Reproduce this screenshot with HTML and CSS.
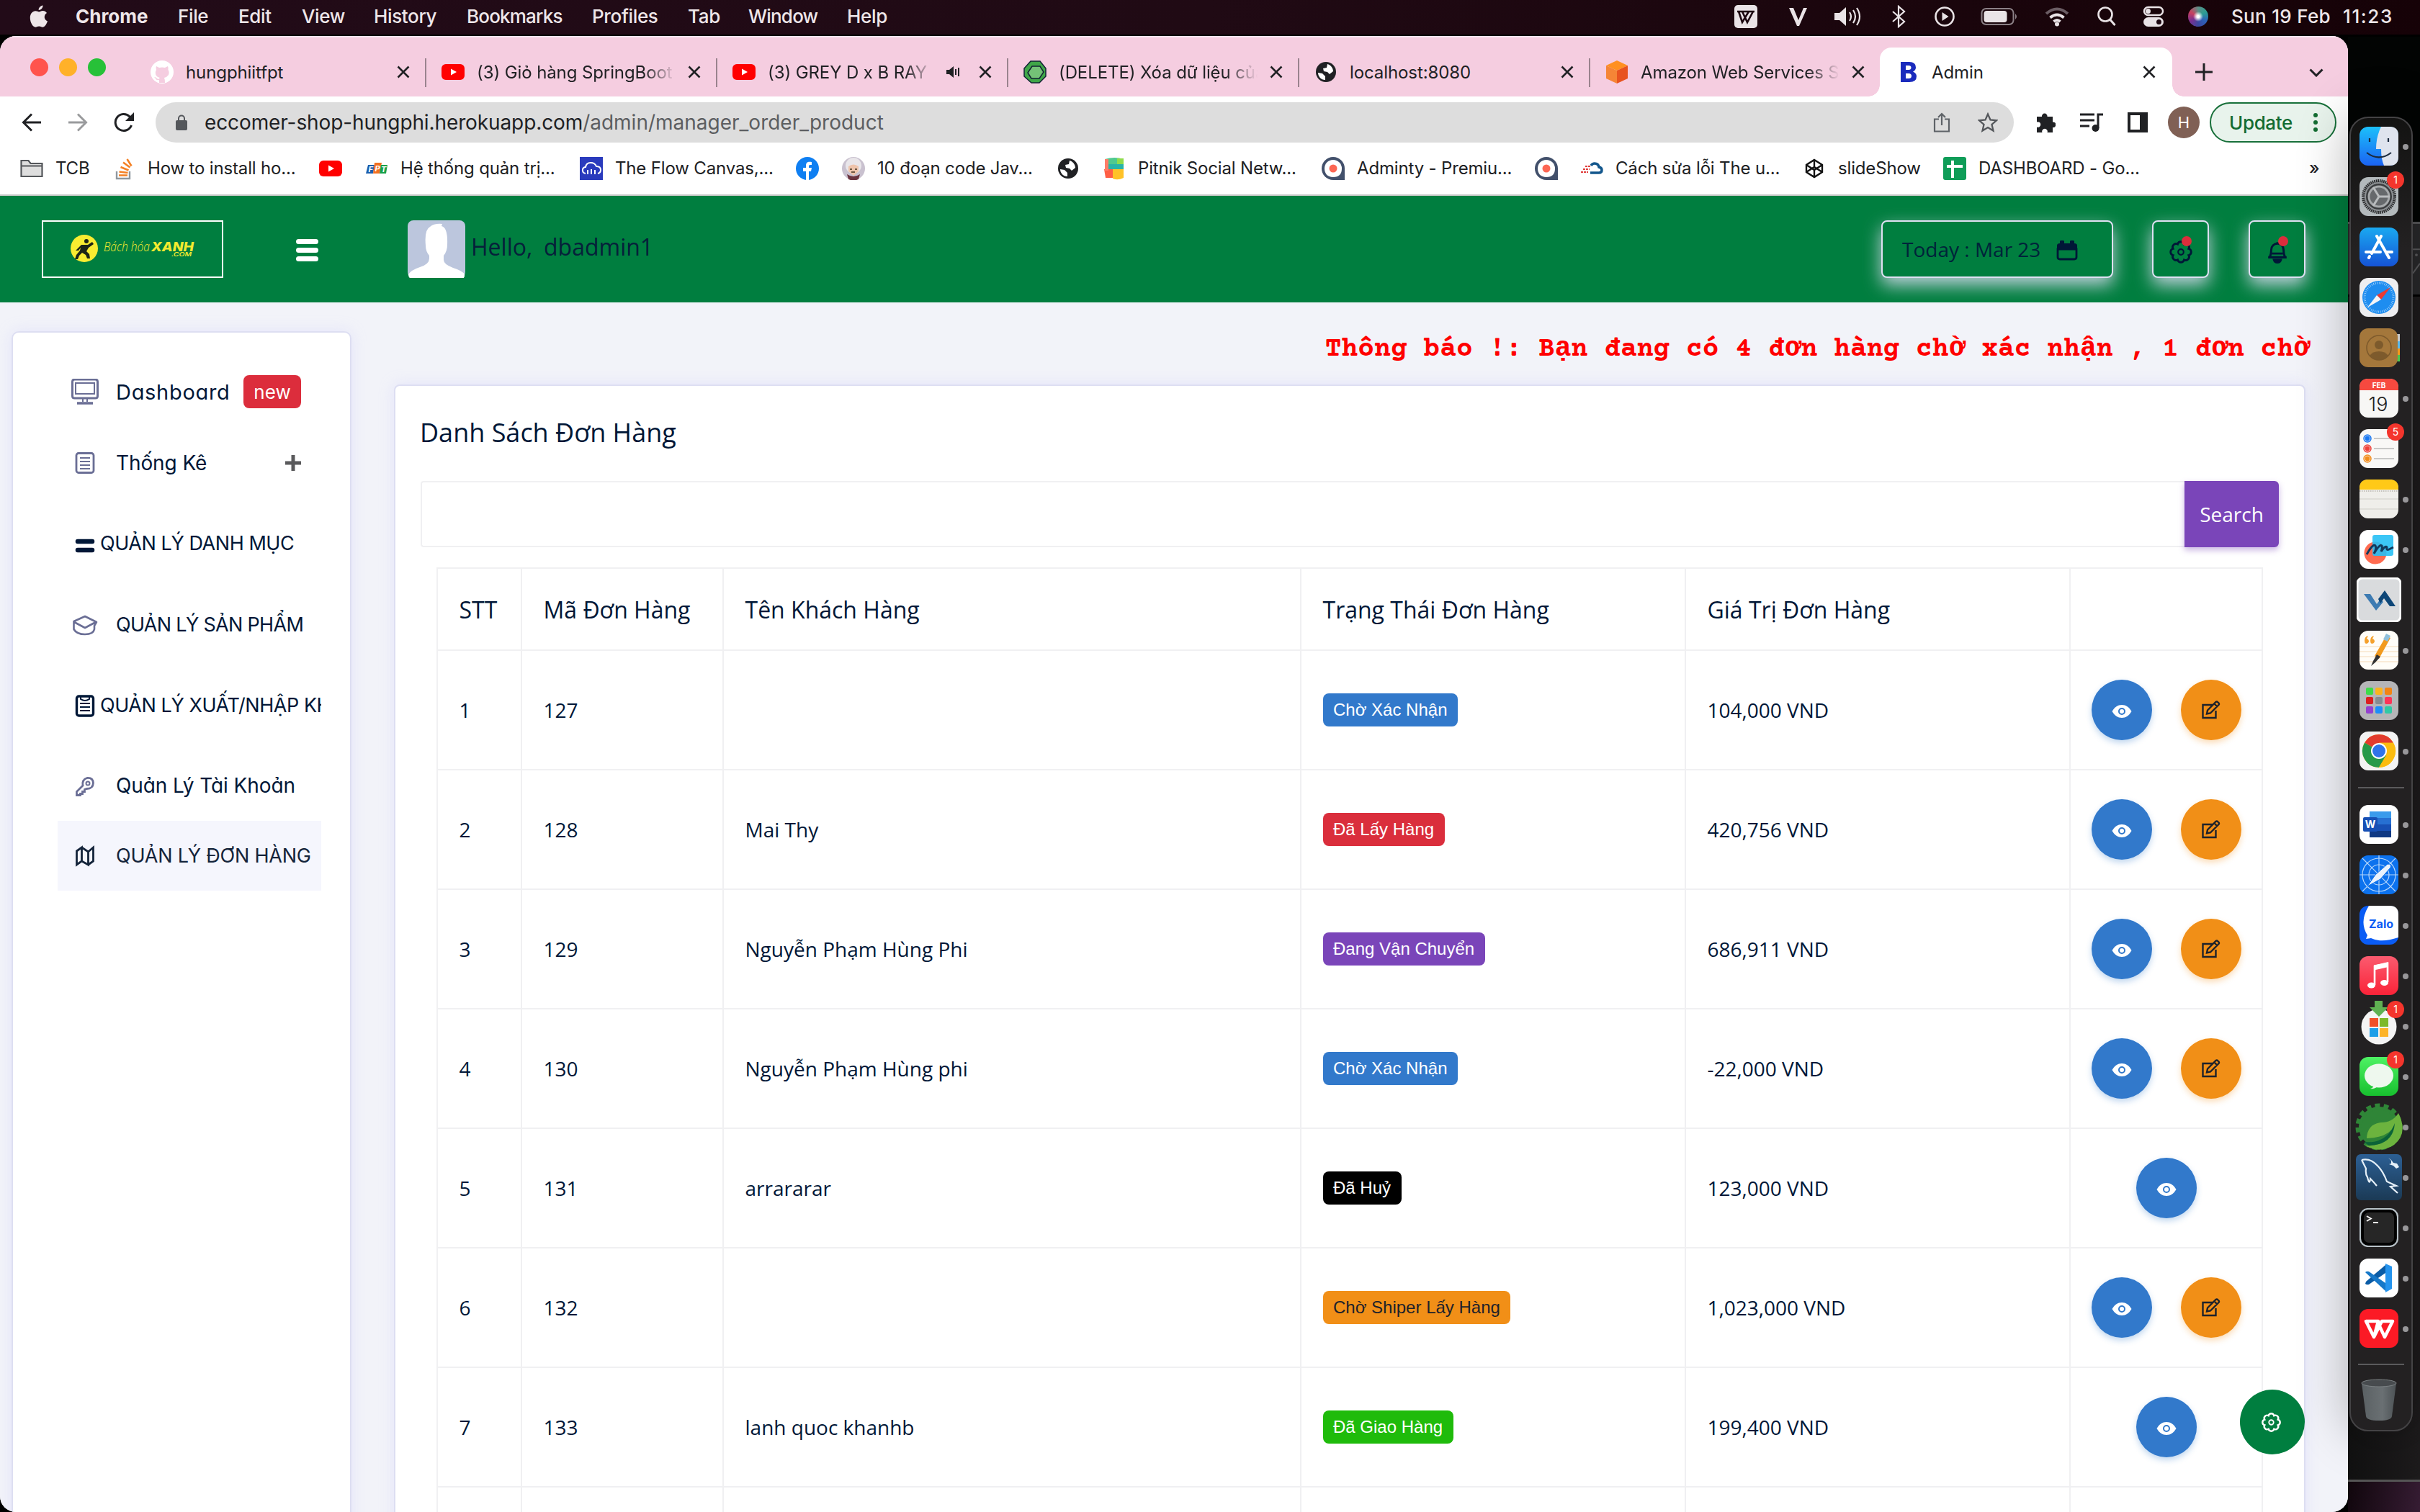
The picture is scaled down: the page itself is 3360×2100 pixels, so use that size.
FILE: index.html
```html
<!DOCTYPE html>
<html lang="vi">
<head>
<meta charset="utf-8">
<title>Admin</title>
<link rel="stylesheet" href="styles.css">
</head>
<body>
<svg class="defs" aria-hidden="true">
  <symbol id="i-x" viewBox="0 0 18 18"><path d="M1.500 1.500l15 15M16.500 1.500l-15 15" stroke="#202124" stroke-width="2.600" fill="none"/></symbol>
  <symbol id="i-yt" viewBox="0 0 32 32"><rect y="5" width="32" height="22" rx="6" fill="#f00"/><path d="M13 11.500v9l8-4.500z" fill="#fff"/></symbol>
  <symbol id="i-globe" viewBox="0 0 32 32"><circle cx="16" cy="16" r="14" fill="#202124"/><path d="M18 5c4 1 8 5 8 10l-5 4-3-3-5-1-1-4 5-1zM5 17l6 1 4 4v5C9 27 5 22 5 17z" fill="#fff"/></symbol>
  <symbol id="i-eye" viewBox="0 0 28 20"><path d="M.5 10C4 4 8.500 1 14 1s10 3 13.500 9C24 16 19.500 19 14 19S4 16 .5 10z" fill="#fff"/><circle cx="14" cy="10" r="4" fill="#fff" stroke="#3279cb" stroke-width="2"/></symbol>
  <symbol id="i-edit" viewBox="0 0 26 26"><path d="M15 6H1.500v18H19.500V14M7 18.500l1-5L19.500 2q1.500-1 3 .5l1 1q1 1.500 0 2.500L12 17.500l-5 1zM17.500 4.500l4 4" fill="none" stroke="#1d222b" stroke-width="2.400"/></symbol>
  <symbol id="i-gear" viewBox="0 0 24 24"><path d="M19.670 8.820a3.300 3.300 0 0 1 0 6.360a3.300 3.300 0 0 1-4.490 4.490a3.300 3.300 0 0 1-6.360 0a3.300 3.300 0 0 1-4.490-4.490a3.300 3.300 0 0 1 0-6.360a3.300 3.300 0 0 1 4.490-4.490a3.300 3.300 0 0 1 6.360 0a3.300 3.300 0 0 1 4.490 4.490z" fill="none" stroke="currentColor" stroke-width="2"/><circle cx="12" cy="12" r="2.700" fill="none" stroke="currentColor" stroke-width="1.500"/></symbol>
  <symbol id="i-adm" viewBox="0 0 32 32"><path d="M16 0a16 16 0 0 1 16 16v16H16A16 16 0 0 1 16 0z" fill="#42506b"/><path d="M16 4a12 12 0 0 1 12 12c0 8-4 12-12 12S4 23 4 16 9 4 16 4z" fill="#fff"/><circle cx="16" cy="16" r="5.500" fill="#fc6754"/></symbol>
</svg>

<div class="desktop">
  <div class="menubar">
    <svg class="apple" viewBox="0 0 26 32"><path d="M18.500.5c.3 3-2.500 6.500-5.800 6.500C12.300 4 15.300.8 18.500.5zM13.200 9.500c1.200 0 2.800-1.600 5.300-1.600 2.200 0 4.200 1 5.500 3-4.800 3-4 9.500 1 11.500-1.500 4-4 8.300-6.800 8.300-2 0-2.800-1.200-5-1.200s-3 1.200-5 1.200C4.500 30.700.8 24 .8 17.800c0-6 3.700-9.500 7.400-9.500 2.200 0 3.800 1.200 5 1.200z" fill="#eee6e9"/></svg>
    <nav class="menu"><b>Chrome</b><span>File</span><span>Edit</span><span>View</span><span>History</span><span>Bookmarks</span><span>Profiles</span><span>Tab</span><span>Window</span><span>Help</span></nav>
    <div class="status">
      <svg viewBox="0 0 32 32"><rect width="32" height="32" rx="5" fill="#e9e3e6"/><path d="M4 9h24M6 9l5 15 9-15M11 9l7 15 8-15" fill="none" stroke="#1c0710" stroke-width="2.600"/></svg>
      <svg class="vee" viewBox="0 0 32 32"><path d="M4 4h6l7 17 7-17h5L18 29h-3z" fill="#e9e3e6"/></svg>
      <svg class="vol" viewBox="0 0 40 32"><path d="M1 11h7l9-8v26l-9-8H1z" fill="#e9e3e6"/><path d="M22 10q4 6 0 12M27 7q6 9 0 18M32 4q8 12 0 24" fill="none" stroke="#e9e3e6" stroke-width="2.200"/></svg>
      <svg class="bt" viewBox="0 0 32 32"><path d="M8 9l16 14-8 7V2l8 7L8 23" fill="none" stroke="#e9e3e6" stroke-width="2.200"/></svg>
      <svg class="play" viewBox="0 0 32 32"><circle cx="16" cy="16" r="12.500" fill="none" stroke="#e9e3e6" stroke-width="2.600"/><path d="M12.500 10v12l9-6z" fill="#e9e3e6"/></svg>
      <svg class="bat" viewBox="0 0 52 32"><rect x="1.500" y="5" width="44" height="22" rx="6" fill="none" stroke="#8b8086" stroke-width="2"/><rect x="4.500" y="8" width="32" height="16" rx="4" fill="#e9e3e6"/><path d="M48 12q4 4 0 8z" fill="#8b8086"/></svg>
      <svg class="wifi" viewBox="0 0 34 32"><path d="M2 12q15-13 30 0" fill="none" stroke="#6b5d64" stroke-width="4"/><path d="M7.500 17.500q9.500-8 19 0M12.500 23q4.500-4 9 0" fill="none" stroke="#e9e3e6" stroke-width="4"/><circle cx="17" cy="26.500" r="3" fill="#e9e3e6"/></svg>
      <svg class="find" viewBox="0 0 32 32"><circle cx="14" cy="13" r="9.500" fill="none" stroke="#e9e3e6" stroke-width="2.600"/><path d="M20.500 20l7 8" stroke="#e9e3e6" stroke-width="3"/></svg>
      <svg class="cc" viewBox="0 0 32 32"><rect x="3" y="3" width="26" height="11" rx="5.500" fill="none" stroke="#e9e3e6" stroke-width="2.400"/><circle cx="8.500" cy="8.500" r="3.500" fill="#e9e3e6"/><rect x="2" y="17" width="28" height="13" rx="6.500" fill="#e9e3e6"/><circle cx="23.500" cy="23.500" r="3.500" fill="#1c0710"/></svg>
      <i class="siri"></i>
      <span class="clock">Sun 19 Feb</span><span class="clock time">11:23</span>
    </div>
  </div>

  <div class="behind"><i class="b1"></i><i class="b2"><svg viewBox="0 0 10 100"><path d="M0 36h10M0 70l10-14" stroke="#5b5b5d" stroke-width="2" fill="none"/><circle cx="5" cy="44" r="2" fill="#5b5b5d"/></svg></i><i class="b3"></i><i class="b4"></i></div>

  <div class="window">
    <div class="tabstrip">
      <div class="lights"><i></i><i></i><i></i></div>
      <div class="tab"><svg class="fav" viewBox="0 0 32 32"><circle cx="16" cy="16" r="16" fill="#fff"/><path d="M8 8l4 2q4-1 8 0l4-2q1 2 .5 5 2 3 .5 7-2 3-6 4 1 2 1 7h-8v-4q-4 1-5-2l-2-2q3 0 4 2 1 1 3 .5 0-1 1-1.500-5-1-6-5-.5-4 1-6Q7 10 8 8z" fill="#f5cde0"/></svg><span class="title">hungphiitfpt</span><svg class="x"><use href="#i-x"/></svg></div>
      <div class="tab"><svg class="fav"><use href="#i-yt"/></svg><span class="title fade">(3) Giỏ hàng SpringBoot</span><svg class="x"><use href="#i-x"/></svg></div>
      <div class="tab"><svg class="fav"><use href="#i-yt"/></svg><span class="title fade short">(3) GREY D x B RAY -</span><svg class="spk" viewBox="0 0 20 20"><path d="M0 7h4l6-5v16l-6-5H0z" fill="#202124"/><path d="M13 6v8M17 4v12" stroke="#202124" stroke-width="2"/></svg><svg class="x"><use href="#i-x"/></svg></div>
      <div class="tab"><svg class="fav" viewBox="0 0 32 32"><path d="M10 1h13l8 10v11l-9 9H11L1 22V11z" fill="#3fa648" stroke="#123" stroke-width="1.500"/><path d="M12 8h11l5 8-6 9H11l-5-8z" fill="#74c277" stroke="#123" stroke-width="1.500"/></svg><span class="title fade">(DELETE) Xóa dữ liệu của</span><svg class="x"><use href="#i-x"/></svg></div>
      <div class="tab"><svg class="fav"><use href="#i-globe"/></svg><span class="title">localhost:8080</span><svg class="x"><use href="#i-x"/></svg></div>
      <div class="tab last"><svg class="fav" viewBox="0 0 32 32"><path d="M16 0l15 7-15 7L1 7z" fill="#ff9021"/><path d="M1 7l15 7v18L1 25z" fill="#f58536"/><path d="M31 7l-15 7v18l15-7z" fill="#e8531f"/></svg><span class="title fade">Amazon Web Services Si</span><svg class="x"><use href="#i-x"/></svg></div>
      <div class="tab active"><svg class="fav" viewBox="0 0 32 32"><path fill-rule="evenodd" d="M7 2h12q9 0 9 7.500 0 4-4 6 5 2 5 6.500 0 8-10 8H7zm7 5v6h4q3.500 0 3.500-3T18 7zm0 11v7h4q4 0 4-3.500T18 18z" fill="#1a2bbd"/></svg><span class="title">Admin</span><svg class="x"><use href="#i-x"/></svg></div>
      <svg class="plus" viewBox="0 0 24 24"><path d="M12 0v24M0 12h24" stroke="#202124" stroke-width="3"/></svg>
      <svg class="chev" viewBox="0 0 20 12"><path d="M1.500 1.500l8.500 8.500 8.500-8.500" fill="none" stroke="#202124" stroke-width="3"/></svg>
    </div>

    <div class="toolbar">
      <svg class="nav n1" viewBox="0 0 28 28"><path d="M27 14H3M14 2.500L2.500 14 14 25.500" fill="none" stroke="#202124" stroke-width="3"/></svg>
      <svg class="nav n2" viewBox="0 0 28 28"><path d="M1 14h24M14 2.500L25.500 14 14 25.500" fill="none" stroke="#9a9b9d" stroke-width="3"/></svg>
      <svg class="nav n3" viewBox="0 0 28 28"><path d="M24.500 18A11.500 11.500 0 1 1 22 6l3 3" fill="none" stroke="#202124" stroke-width="3"/><path d="M28 0v12H16z" fill="#202124"/></svg>
      <div class="omnibox">
        <svg class="lock" viewBox="0 0 16 22"><path d="M4 9V5.500a4 4 0 0 1 8 0V9" fill="none" stroke="#54575b" stroke-width="2"/><rect y="8" width="16" height="14" rx="2" fill="#54575b"/></svg>
        <span class="url"><b>eccomer-shop-hungphi.herokuapp.com</b>/admin/manager_order_product</span>
        <svg class="share" viewBox="0 0 24 28"><path d="M8 9.500H2v17h20v-17h-6M12 18V2M7 7l5-5 5 5" fill="none" stroke="#5f6368" stroke-width="2.200"/></svg>
        <svg class="star" viewBox="0 0 28 28"><path d="M14 2.500l3.500 8 8.500.8-6.500 5.700 2 8.500L14 21l-7.500 4.500 2-8.500L2 11.300l8.500-.8z" fill="none" stroke="#54575b" stroke-width="2.300"/></svg>
      </div>
      <svg class="tool" viewBox="0 0 28 28"><path d="M2 6h7a3.800 3.800 0 1 1 7.500 0H24v7.500a3.800 3.800 0 1 1 0 7.500v7h-7.500a3.800 3.800 0 1 0-7 0H2v-7.500a3.800 3.800 0 1 0 0-7z" fill="#202124"/></svg>
      <svg class="tool t2" viewBox="0 0 32 28"><path d="M0 3h20M0 11h20M0 19h13" stroke="#202124" stroke-width="3"/><path d="M25 22V3h7" fill="none" stroke="#202124" stroke-width="3"/><circle cx="21.500" cy="22" r="5" fill="#202124"/></svg>
      <svg class="tool t3" viewBox="0 0 28 28"><path fill-rule="evenodd" d="M0 0h28v28H0zm4 4v20h13V4z" fill="#202124"/></svg>
      <span class="me">H</span>
      <span class="update">Update<svg viewBox="0 0 8 26"><circle cx="4" cy="3" r="3"/><circle cx="4" cy="13" r="3"/><circle cx="4" cy="23" r="3"/></svg></span>
    </div>

    <div class="bookmarks">
      <span><svg viewBox="0 0 32 26"><path d="M1.500 24V2h10l3 4h16v18z" fill="#dedede" stroke="#54575b" stroke-width="2.200"/><path d="M2 9.500h28" stroke="#54575b" stroke-width="2"/></svg>TCB</span>
      <span><svg viewBox="0 0 32 32"><path d="M6 20v10h18V20" fill="none" stroke="#8f979e" stroke-width="2.400"/><path d="M9 25.500h12M9.500 20.500l12 1.500M11.500 14l11 4.500M15 7.500l9.500 7M20.500 3l6 9.500" stroke="#f48024" stroke-width="2.600"/></svg>How to install ho...</span>
      <span><svg><use href="#i-yt"/></svg></span>
      <span><svg viewBox="0 0 32 32"><path d="M4 11h9l-2 12H1z" fill="#1b5fae"/><path d="M13 8h10l-3 15h-9z" fill="#f26f21"/><path d="M22 11h9l-2 12h-9z" fill="#18a04a"/><text x="4.500" y="21" class="fpt">F</text><text x="13.500" y="20" class="fpt">P</text><text x="22" y="21" class="fpt">T</text></svg>Hệ thống quản trị...</span>
      <span><svg viewBox="0 0 32 32"><path d="M0 0h32v32H0z" fill="#2a3bbd"/><path d="M8 23q-5-1-4-6 1-3 4-3 1-6 7-6t8 5q6 0 6 5 0 4-4 5M11 24v-6M16 24v-7M21 24v-6" fill="none" stroke="#fff" stroke-width="2"/></svg>The Flow Canvas,...</span>
      <span><svg viewBox="0 0 32 32"><circle cx="16" cy="16" r="16" fill="#0f7ff2"/><path d="M14 32V20h-4v-5h4v-3c0-5 3-6 8-5v4c-3 0-4 0-4 2v2h4l-1 5h-3v12z" fill="#fff"/></svg></span>
      <span><svg viewBox="0 0 32 32"><circle cx="16" cy="16" r="16" fill="#c9c1cf"/><circle cx="16" cy="12" r="11" fill="#e9e6ea"/><path d="M9 13q7-5 14 0v7l-7 6-7-6z" fill="#eec4ac"/><path d="M7 24q9 6 18 0l-2 7q-7 3-14 0z" fill="#6b3440"/><path d="M11 17h3M18 17h3M13 21h5" stroke="#432" stroke-width="1.500"/></svg>10 đoạn code Jav...</span>
      <span><svg><use href="#i-globe"/></svg></span>
      <span><svg viewBox="0 0 32 32"><path d="M3 3q14-4 26 0v11H3z" fill="#4fc98f"/><path d="M3 10h26v9H3z" fill="#29b4a8"/><path d="M2 17h14l-2 12H4z" fill="#ff5f45"/><path d="M14 17h15v12q-8 4-15 1z" fill="#ffc227"/><path d="M3 3h5v16H3z" fill="#ff7d68"/><path d="M20 2h9v8h-9z" fill="#8fdc4c"/></svg>Pitnik Social Netw...</span>
      <span><svg><use href="#i-adm"/></svg>Adminty - Premiu...</span>
      <span><svg><use href="#i-adm"/></svg></span>
      <span><svg viewBox="0 0 32 32"><path d="M14 22h12q4 0 4-4 0-3-4-4-1-5-6-5-3 0-5 3" fill="none" stroke="#12568c" stroke-width="3.500"/><path d="M7 13h8M4 17h9M1 21h10" stroke="#e0403f" stroke-width="2" stroke-dasharray="3 1"/></svg>Cách sửa lỗi The u...</span>
      <span><svg viewBox="0 0 32 32"><path d="M16 4l11 7v10l-11 7-11-7V11zM5 11l11 7 11-7M5 21l11-7 11 7M16 4v10M16 18v10" fill="none" stroke="#111" stroke-width="2.400"/></svg>slideShow</span>
      <span><svg viewBox="0 0 32 32"><rect width="32" height="32" rx="3" fill="#0f9d58"/><path d="M13 5v24M5 13h22" stroke="#fff" stroke-width="4"/></svg>DASHBOARD - Go...</span>
      <span class="more">»</span>
    </div>

    <div class="page">
      <header class="topbar">
        <div class="logo">
          <svg viewBox="0 0 248 76"><circle cx="57" cy="37" r="19" fill="#f9ec31"/><g fill="#1d2417"><circle cx="60" cy="27" r="3"/><path d="M53 32h9l6-4 2 3-7 5-3 5 4 4 1 6h-4l-2-5-5-3-4 4-2 5h-4l2-6 5-6 1-4-3 4h-4z"/></g><text x="84" y="41" textLength="64" lengthAdjust="spacingAndGlyphs" class="lg1">Bách hóa</text><text x="150" y="41" textLength="59" lengthAdjust="spacingAndGlyphs" class="lg2">XANH</text><text x="178" y="48" textLength="28" lengthAdjust="spacingAndGlyphs" class="lg3">.COM</text></svg>
        </div>
        <div class="burger"><i></i><i></i><i></i></div>
        <svg class="avatar" viewBox="0 0 80 80"><rect width="80" height="80" rx="8" fill="#bcc6dd"/><path d="M1 75q4-6 16-10 13-4 13-12v-4q-5-6-5-14-2-22 6-26 6-5 17-4l-1 3q9 2 8 26 0 9-5 15v6q0 6 13 11 13 4 16 9v2q0 4-5 4H6q-5 0-5-6z" fill="#fff"/></svg>
        <span class="hello">Hello,</span><span class="user">dbadmin1</span>
        <div class="btn today">Today : Mar 23<svg viewBox="0 0 30 28"><path d="M2 12v11q0 3 3 3h20q3 0 3-3V12z" fill="none" stroke="#001737" stroke-width="2.800"/><path d="M1 12V7q0-3 4-3V1q0-1 2-1h2q2 0 2 1v3h8V1q0-1 2-1h2q2 0 2 1v3q4 0 4 3v5z" fill="#001737"/></svg></div>
        <div class="btn sq"><svg><use href="#i-gear"/></svg><i></i></div>
        <div class="btn sq"><svg viewBox="0 0 28 32"><path d="M14 3v3M4 23q2-4 2-10a8 8 0 0 1 16 0q0 6 2 10zM7 18h14" fill="none" stroke="#001737" stroke-width="2.800"/><path d="M2 22.500h24M9 26h10q-1 4-5 4t-5-4z" fill="#001737" stroke="#001737" stroke-width="2"/></svg><i></i></div>
      </header>

      <div class="body">
        <aside class="sidebar">
          <a class="wide"><svg viewBox="0 0 38 36"><path d="M1.500 4q0-3 3-3h29q3 0 3 3v20q0 3-3 3h-29q-3 0-3-3z" fill="none" stroke="#6a6e95" stroke-width="3"/><path d="M6 6h26v15H6zM16 27v5M22 27v5" fill="none" stroke="#6a6e95" stroke-width="2"/><path d="M8 34h22" stroke="#6a6e95" stroke-width="3.500"/></svg><span>Dashboard</span><em>new</em></a>
          <a><svg viewBox="0 0 38 36"><rect x="7" y="4.500" width="24" height="27" rx="3" fill="none" stroke="#6a6e95" stroke-width="2.800"/><path d="M12 11h14M12 16h14M12 21h14M12 26h14" stroke="#6a6e95" stroke-width="1.800"/></svg><span>Thống Kê</span><svg class="add" viewBox="0 0 22 22"><path d="M11 0v22M0 11h22" stroke="#5a5a5c" stroke-width="5"/></svg></a>
          <a class="tight"><svg viewBox="0 0 38 36"><path d="M9 15h20M9 27h20" stroke="#001737" stroke-width="6.500" stroke-linecap="round"/></svg><span class="caps mid">QUẢN LÝ DANH MỤC</span></a>
          <a><svg viewBox="0 0 38 36"><path d="M19 7L3.500 14v11q4 7 15.500 7t13-7v-5l3-5zM4 15l15 8 15-8" fill="none" stroke="#6a6e95" stroke-width="2.600" stroke-linejoin="round"/></svg><span class="caps">QUẢN LÝ SẢN PHẨM</span></a>
          <a class="tight"><svg viewBox="0 0 38 36"><rect x="7.500" y="6" width="23" height="27" rx="3" fill="none" stroke="#001737" stroke-width="3.400"/><path d="M13 6v4q6 4 12 0V6M12 16h14M12 21h14M12 26h14" fill="none" stroke="#001737" stroke-width="2"/></svg><span class="caps mid">QUẢN LÝ XUẤT/NHẬP KHO</span></a>
          <a><svg viewBox="0 0 38 36"><path d="M7.500 31.500v-5l8.500-8.500q-1.500-8 6-10.500 8-.5 8.500 7-.5 8-9 8l-3 1v3h-3v3h-3v2z" fill="none" stroke="#6a6e95" stroke-width="2.800"/><circle cx="23" cy="15" r="2.500" fill="none" stroke="#6a6e95" stroke-width="2"/></svg><span>Quản Lý Tài Khoản</span></a>
          <a class="on"><svg viewBox="0 0 38 36"><path d="M7.500 11l7-5v19l-7 5zM14.500 6l9 6v18l-9-5M23.500 12l7-6v19l-7 5" fill="none" stroke="#14243a" stroke-width="2.800"/></svg><span class="caps loose">QUẢN LÝ ĐƠN HÀNG</span></a>
        </aside>

        <main>
          <div class="notice">Thông báo !: Bạn đang có 4 đơn hàng chờ xác nhận , 1 đơn chờ</div>
          <section class="card">
            <h2>Danh Sách Đơn Hàng</h2>
            <div class="search"><div class="field"></div><button>Search</button></div>
            <table>
              <colgroup><col class="c1"><col class="c2"><col class="c3"><col class="c4"><col class="c5"><col class="c6"></colgroup>
              <thead><tr><th>STT</th><th>Mã Đơn Hàng</th><th>Tên Khách Hàng</th><th>Trạng Thái Đơn Hàng</th><th>Giá Trị Đơn Hàng</th><th></th></tr></thead>
              <tbody>
                <tr><td>1</td><td>127</td><td></td><td><span class="badge blue">Chờ Xác Nhận</span></td><td>104,000 VND</td><td><div class="acts"><i class="eye"><svg><use href="#i-eye"/></svg></i><i class="edit"><svg><use href="#i-edit"/></svg></i></div></td></tr>
                <tr><td>2</td><td>128</td><td>Mai Thy</td><td><span class="badge red">Đã Lấy Hàng</span></td><td>420,756 VND</td><td><div class="acts"><i class="eye"><svg><use href="#i-eye"/></svg></i><i class="edit"><svg><use href="#i-edit"/></svg></i></div></td></tr>
                <tr><td>3</td><td>129</td><td>Nguyễn Phạm Hùng Phi</td><td><span class="badge purple">Đang Vận Chuyển</span></td><td>686,911 VND</td><td><div class="acts"><i class="eye"><svg><use href="#i-eye"/></svg></i><i class="edit"><svg><use href="#i-edit"/></svg></i></div></td></tr>
                <tr><td>4</td><td>130</td><td>Nguyễn Phạm Hùng phi</td><td><span class="badge blue">Chờ Xác Nhận</span></td><td>-22,000 VND</td><td><div class="acts"><i class="eye"><svg><use href="#i-eye"/></svg></i><i class="edit"><svg><use href="#i-edit"/></svg></i></div></td></tr>
                <tr><td>5</td><td>131</td><td>arrararar</td><td><span class="badge black">Đã Huỷ</span></td><td>123,000 VND</td><td><div class="acts"><i class="eye"><svg><use href="#i-eye"/></svg></i></div></td></tr>
                <tr><td>6</td><td>132</td><td></td><td><span class="badge orange">Chờ Shiper Lấy Hàng</span></td><td>1,023,000 VND</td><td><div class="acts"><i class="eye"><svg><use href="#i-eye"/></svg></i><i class="edit"><svg><use href="#i-edit"/></svg></i></div></td></tr>
                <tr><td>7</td><td>133</td><td>lanh quoc khanhb</td><td><span class="badge green">Đã Giao Hàng</span></td><td>199,400 VND</td><td><div class="acts"><i class="eye"><svg><use href="#i-eye"/></svg></i></div></td></tr>
                <tr><td></td><td></td><td></td><td></td><td></td><td></td></tr>
              </tbody>
            </table>
          </section>
        </main>
      </div>
      <div class="fab"><svg><use href="#i-gear"/></svg></div>
    </div>
  </div>

  <div class="dock">
    <div class="app run"><svg viewBox="0 0 54 54"><defs><linearGradient id="gf" x2="0" y2="1"><stop stop-color="#1cc0fb"/><stop offset="1" stop-color="#1b63f2"/></linearGradient></defs><rect width="54" height="54" rx="12" fill="url(#gf)"/><path d="M30 0q-7 14-7 31h7q0 14 4 23h8q12 0 12-12V12Q54 0 42 0z" fill="#dfe4ee"/><path d="M10 36q17 13 34 0M14 16v5M40 16v5" fill="none" stroke="#1b2a3d" stroke-width="2.200"/></svg></div>
    <div class="app"><svg viewBox="0 0 54 54"><rect width="54" height="54" rx="12" fill="#b3b9bc"/><circle cx="27" cy="27" r="22" fill="#8d9194" stroke="#2a2b2d" stroke-width="4" stroke-dasharray="1.600 1"/><circle cx="27" cy="27" r="18" fill="#3b3d3f"/><circle cx="27" cy="27" r="14" fill="#66696c" stroke="#a6a9ab" stroke-width="3"/><path d="M27 27h15M27 27l-8-13M27 27l-8 13" stroke="#b9bcbe" stroke-width="3"/></svg><b>1</b></div>
    <div class="app"><svg viewBox="0 0 54 54"><defs><linearGradient id="ga" x2="0" y2="1"><stop stop-color="#1aa9f1"/><stop offset="1" stop-color="#1553d6"/></linearGradient></defs><rect width="54" height="54" rx="12" fill="url(#ga)"/><path d="M30 12L17 36M24 12l17 30M9 34h20M37 34h8M14 40l-1 2" stroke="#fff" stroke-width="4" stroke-linecap="round"/></svg></div>
    <div class="app"><svg viewBox="0 0 54 54"><rect width="54" height="54" rx="12" fill="#eeeef0"/><circle cx="27" cy="27" r="23" fill="#1e8df0"/><circle cx="27" cy="27" r="20" fill="none" stroke="#a9d4fa" stroke-width="3" stroke-dasharray=".8 1.800"/><path d="M43 13L24 24l6 6z" fill="#ea3b34"/><path d="M11 41l13-17 6 6z" fill="#f4f5f7"/></svg></div>
    <div class="app"><svg viewBox="0 0 58 54" class="w58"><path d="M50 8h7v10h-7z" fill="#c9c9c9"/><path d="M50 18h7v10h-7z" fill="#5bb9ea"/><path d="M50 28h7v10h-7z" fill="#f59a1c"/><path d="M50 37h7v9h-7z" fill="#4cc94e"/><rect x="1" width="53" height="54" rx="12" fill="#a4773b"/><circle cx="28" cy="27" r="17" fill="none" stroke="#7d5a2c" stroke-width="1.600"/><circle cx="28" cy="23" r="6" fill="#7d5a2c"/><path d="M15 38q4-6 13-6t13 6q-5 6-13 6t-13-6z" fill="#7d5a2c"/></svg></div>
    <div class="app run"><svg viewBox="0 0 54 54"><rect width="54" height="54" rx="12" fill="#f7f7f5"/><path d="M0 16v-4Q0 0 12 0h30q12 0 12 12v4z" fill="#f7493f"/><text x="27" y="13" class="feb">FEB</text><text x="26" y="45" class="d19">19</text></svg></div>
    <div class="app"><svg viewBox="0 0 54 54"><rect width="54" height="54" rx="12" fill="#f9f8f6"/><path d="M20 13h28M20 27h28M20 41h28" stroke="#b9b9b9" stroke-width="1.500"/><g stroke-width="1.500"><circle cx="11" cy="13" r="3.400" fill="#1877f2"/><circle cx="11" cy="27" r="3.400" fill="#ee4139"/><circle cx="11" cy="41" r="3.400" fill="#f28c1a"/><g fill="none"><circle cx="11" cy="13" r="5" stroke="#1877f2"/><circle cx="11" cy="27" r="5" stroke="#ee4139"/><circle cx="11" cy="41" r="5" stroke="#f28c1a"/></g></g></svg><b>5</b></div>
    <div class="app run"><svg viewBox="0 0 54 54"><rect width="54" height="54" rx="12" fill="#efeeea"/><path d="M0 14v-2Q0 0 12 0h30q12 0 12 12v2z" fill="#ffc917"/><path d="M0 16h54" stroke="#9a968b" stroke-dasharray="1.500 1.500"/><path d="M0 27h54M0 41h54" stroke="#cfcdc8" stroke-width="1.200"/></svg></div>
    <div class="app run"><svg viewBox="0 0 54 54"><rect width="54" height="54" rx="12" fill="#fff"/><circle cx="22" cy="32" r="15.500" fill="#ff6b50"/><rect x="18" y="7" width="29" height="29" rx="3" fill="#27c0f5" opacity=".9"/><path d="M10 34q9-16 12-12 2 4-2 11 8-14 11-11 1 3-1 8 6-9 8-6-1 5 3 3l6-3" fill="none" stroke="#123a5e" stroke-width="3"/></svg></div>
    <div class="app"><svg viewBox="0 0 62 62" class="w62"><rect x="1" y="1" width="60" height="60" rx="7" fill="#d9dbdd" stroke="#fff" stroke-width="3"/><path d="M10 23h9l9 14 5-7 4 4-10 12z" fill="#3d7bb2"/><path d="M30 30l9-12 15 22h-8l-8-11-5 7z" fill="#0d4677"/></svg></div>
    <div class="app run"><svg viewBox="0 0 54 54"><rect width="54" height="54" rx="12" fill="#fffdf8"/><path d="M0 22h54M0 29h54M0 36h54M0 43h54" stroke="#f5dcb8" stroke-width="1.200"/><path d="M7 14q0-6 5-7l-2 4q3 1 3 4-1 3-4 3-2-1-2-4zM15 14q0-6 5-7l-2 4q3 1 3 4-1 3-4 3-2-1-2-4z" fill="#f5a12c"/><path d="M37 7l6 3-16 29-6-4z" fill="#f29a1d"/><path d="M24 33l-5 9-3 7 6-5 7-8z" fill="#333"/><path d="M37 4l6 3-4 8-6-3z" fill="#8fc0dc"/></svg></div>
    <div class="app"><svg viewBox="0 0 54 54"><rect width="54" height="54" rx="12" fill="#b5b5b7"/><rect x="9" y="9" width="10" height="10" rx="2" fill="#3ddc49"/><rect x="22" y="9" width="10" height="10" rx="2" fill="#fbb41e"/><rect x="35" y="9" width="10" height="10" rx="2" fill="#f38413"/><rect x="9" y="22" width="10" height="10" rx="2" fill="#dc1f1f"/><rect x="22" y="22" width="10" height="10" rx="2" fill="#858b90"/><rect x="35" y="22" width="10" height="10" rx="2" fill="#fc3458"/><rect x="9" y="35" width="10" height="10" rx="2" fill="#9440cf"/><rect x="22" y="35" width="10" height="10" rx="2" fill="#1c8ef9"/><rect x="35" y="35" width="10" height="10" rx="2" fill="#31c9a4"/></svg></div>
    <div class="app run"><svg viewBox="0 0 54 54"><rect width="54" height="54" rx="12" fill="#f3f3f3"/><circle cx="27" cy="27" r="23" fill="#fbbc0f"/><path d="M27 27L7.080 15.500A23 23 0 0 1 46.920 15.500z" fill="#e33b2e"/><path d="M27 27L7.080 15.500A23 23 0 0 0 27 50l10-17z" fill="#269a49"/><path d="M27 15.500h19.920A23 23 0 0 1 27 50l10-17z" fill="#fbbc0f"/><circle cx="27" cy="27" r="11" fill="#fff"/><circle cx="27" cy="27" r="9" fill="#2f73ea"/></svg></div>
    <hr>
    <div class="app run"><svg viewBox="0 0 54 54"><rect width="54" height="54" rx="12" fill="#fff"/><path d="M14 9h30v10H14z" fill="#3a9bec"/><path d="M14 18h30v9H14z" fill="#2770d2"/><path d="M14 27h30v9H14z" fill="#1850b4"/><path d="M14 36h30v9H14z" fill="#103983"/><rect x="5" y="17" width="20" height="20" rx="2" fill="#1750b5"/><text x="15" y="32" class="wd">W</text></svg></div>
    <div class="app run"><svg viewBox="0 0 54 54"><rect width="54" height="54" rx="12" fill="#0c72ee"/><g fill="none" stroke="#b5d6fb" stroke-width="1.200"><circle cx="27" cy="27" r="23"/><circle cx="27" cy="27" r="14"/><path d="M27 0v54M0 27h54M4 4l46 46M50 4L4 50"/></g><path d="M11 43l11-16 17-15q6 0 4 5L29 33z" fill="#e9f2fc" stroke="#0c72ee"/></svg></div>
    <div class="app run"><svg viewBox="0 0 54 54"><rect width="54" height="54" rx="12" fill="#0a5cf5"/><path d="M13 0h29q12 0 12 12v32q-24 8-38 1l-7 1 2-5q-12-19 2-41z" fill="#fff"/><text x="30" y="31" class="zl">Zalo</text></svg></div>
    <div class="app run"><svg viewBox="0 0 54 54"><defs><linearGradient id="gm" x2="0" y2="1"><stop stop-color="#fb5b6f"/><stop offset="1" stop-color="#fa2338"/></linearGradient></defs><rect width="54" height="54" rx="12" fill="url(#gm)"/><path d="M21 40V14l18-4v26" fill="none" stroke="#fff" stroke-width="2.600"/><path d="M20 12.500l20-4.500v7l-20 4.500z" fill="#fff"/><ellipse cx="16.500" cy="40.500" rx="5.500" ry="4" fill="#fff"/><ellipse cx="34.500" cy="37" rx="5.500" ry="4" fill="#fff"/></svg></div>
    <div class="app run"><svg viewBox="0 0 54 62" class="h62"><circle cx="27" cy="36" r="24.500" fill="#f4f4f4"/><path d="M14 24h12v12H14z" fill="#f0502a"/><path d="M28 24h12v12H28z" fill="#7db928"/><path d="M14 38h12v12H14z" fill="#1e9fe8"/><path d="M28 38h12v12H28z" fill="#fdb327"/><path d="M21 0h11v9h8L27 22 14 9h7z" fill="#5fb152"/></svg><b>1</b></div>
    <div class="app run"><svg viewBox="0 0 54 54"><defs><linearGradient id="gs" x2="0" y2="1"><stop stop-color="#4ef264"/><stop offset="1" stop-color="#17c02e"/></linearGradient></defs><rect width="54" height="54" rx="12" fill="url(#gs)"/><ellipse cx="27" cy="26" rx="20" ry="16.500" fill="#eef8ee"/><path d="M20 38q0 5-5 6 8 1 11-5z" fill="#eef8ee"/></svg><b>1</b></div>
    <div class="app run"><svg viewBox="0 0 66 66" class="w66"><circle cx="33" cy="33" r="28" fill="#2f8537" stroke="#2f8537" stroke-width="9" stroke-dasharray="6.500 5"/><path d="M60 14q14 28-6 44-20 13-40 1 34 2 40-27-8 16-38 17 1-20 20-22 16 0 24-13z" fill="#6cb33e"/><path d="M12 54q32 3 43-26-2 30-36 31z" fill="#0b6338"/></svg></div>
    <div class="app run"><svg viewBox="0 0 64 64" class="w64"><defs><linearGradient id="gq" x2="0" y2="1"><stop stop-color="#2c5f94"/><stop offset="1" stop-color="#1b3a55"/></linearGradient></defs><rect width="64" height="64" rx="7" fill="url(#gq)"/><path d="M8 8q12-3 22 8 8 8 13 22l13 6-8 1 10 9M8 8q3 6 6 12-1 8 2 12 3 12 4 2 5 5 9 10" fill="none" stroke="#e6f0f8" stroke-width="2.200"/><path d="M45 5l4 4v4l-3 1 6 2 4 4 4-2-3-5-5-1-3-4z" fill="#e6f0f8"/></svg></div>
    <div class="app run"><svg viewBox="0 0 54 54"><rect x="1" y="1" width="52" height="52" rx="11" fill="#000" stroke="#b9c3c9" stroke-width="2.200"/><rect x="6" y="6" width="42" height="42" rx="7" fill="#262626"/><path d="M10 11l6 3.500-6 3.500M19 20h7" fill="none" stroke="#fff" stroke-width="1.800"/></svg></div>
    <div class="app run"><svg viewBox="0 0 54 54"><rect width="54" height="54" rx="12" fill="#fff"/><path d="M9 32L36 9v11L13 36q-3 1-5-1z" fill="#0b5ca6"/><path d="M9 20l27 25V34L13 18q-3-1-5 1z" fill="#1678c9"/><path d="M36 7l9 4v31l-9 5z" fill="#2594ee"/></svg></div>
    <div class="app run"><svg viewBox="0 0 54 54"><rect width="54" height="54" rx="12" fill="#fb1a25"/><path d="M9 17h17L20 39 9 17l11 22 11-22h15L35 39l-8-17" fill="none" stroke="#fff" stroke-width="4.500" stroke-linejoin="round"/></svg></div>
    <hr class="h2">
    <div class="app"><svg viewBox="0 0 54 60" class="h60"><defs><linearGradient id="gt"><stop stop-color="#5a6063"/><stop offset=".6" stop-color="#6a7073"/><stop offset="1" stop-color="#4c5255"/></linearGradient></defs><path d="M3 6h48l-6 46q-1 6-18 6T9 52z" fill="url(#gt)"/><ellipse cx="27" cy="6" rx="24" ry="5" fill="#474b4e" stroke="#7b8183"/></svg></div>
  </div>
</div>
</body>
</html>
```
FILE: styles.css
```css
* { box-sizing: border-box; }
html, body { margin: 0; height: 100%; }
body { overflow: hidden; font-family: Inter, "Noto Sans", sans-serif; color: #202124; }
svg { display: block; flex: none; }
i, em { font-style: normal; }
.defs { position: absolute; width: 0; height: 0; }

.desktop { position: relative; width: 3360px; height: 2100px; background: #000; overflow: hidden; }

/* macOS menu bar */
.menubar { display: flex; align-items: center; height: 48px; padding: 0 37px 3px 41px; background: linear-gradient(90deg, #220b18, #200a14 50%, #160207); color: #eee6e9; font-size: 26px; letter-spacing: -.35px; }
.apple { width: 26px; height: 32px; margin-right: 38px; }
.menu { display: grid; grid-template-columns: 142px 84px 88px 100px 129px 174px 133px 84px 137px auto; font-weight: 500; white-space: nowrap; }
.menu b { font-weight: 700; letter-spacing: 0; }
.menu span:nth-child(6), .menu span:nth-child(9) { letter-spacing: -.8px; }
.status { display: flex; align-items: center; margin-left: auto; }
.status svg { width: 32px; height: 32px; }
.status .vee { margin-left: 40px; }
.status .vol { width: 40px; margin-left: 34px; }
.status .bt { margin-left: 34px; }
.status .play { margin-left: 32px; }
.status .bat { width: 52px; margin-left: 34px; }
.status .wifi { width: 34px; margin-left: 37px; }
.status .find { margin-left: 36px; }
.status .cc { margin-left: 33px; }
.siri { width: 28px; height: 28px; margin: 0 32px; border-radius: 50%; background: radial-gradient(circle at 50% 50%, #fff 0 8%, transparent 35%), conic-gradient(#5d8f86, #2b9d92, #2c62b8, #3b48a0, #7a3090, #c8405f, #5d8f86); }
.clock { width: 138px; letter-spacing: .3px; font-weight: 500; white-space: nowrap; }
.time { width: 70px; margin-left: 17px; letter-spacing: 1.6px; }

/* strips of other windows seen past the dock */
.behind { position: absolute; top: 51px; right: 0; width: 100px; height: 2049px; display: flex; flex-direction: column; background: #000; }
.b1 { height: 257px; background: #020403; }
.b2 { height: 104px; background: #29292b; border-top: 3px solid #58585a; border-bottom: 3px solid #000; }
.b2 svg { width: 10px; height: 98px; margin-left: 90px; }
.b3 { height: 1646px; background: linear-gradient(90deg, #111, #1d1b1c); border-bottom: 3px solid #555; }
.b4 { flex: 1; background: linear-gradient(100deg, #10060c, #361c33); }

/* browser window */
.window { position: absolute; left: 0; top: 50px; width: 3260px; height: 2050px; border-radius: 22px; overflow: hidden; background: #fff; display: flex; flex-direction: column; }
.tabstrip { flex: none; display: flex; height: 84px; background: #f5cde0; border-top: 2px solid #fae3ee; font-size: 24px; letter-spacing: -.1px; padding-top: 14px; }
.lights { display: flex; gap: 15px; width: 187px; padding: 15px 0 0 42px; }
.lights i { width: 25px; height: 25px; border-radius: 50%; background: #ff544d; }
.lights i:nth-child(2) { background: #ffb129; }
.lights i:nth-child(3) { background: #27c138; }
.tab { display: flex; align-items: center; width: 404px; height: 68px; padding-left: 22px; position: relative; }
.tab::after { content: ""; position: absolute; right: -1px; top: 15px; width: 2px; height: 40px; background: #9a838e; }
.fav { width: 32px; height: 32px; }
.title { width: 276px; margin-left: 17px; overflow: hidden; white-space: nowrap; }
.fade { -webkit-mask-image: linear-gradient(90deg, #000 84%, transparent); mask-image: linear-gradient(90deg, #000 84%, transparent); }
.title.short { width: 229px; }
.spk { width: 20px; height: 20px; margin: 0 8px 0 19px; }
.x { width: 18px; height: 18px; margin-left: 17px; }
.last::after, .active::after { display: none; }
.active { width: 406px; margin-left: -1px; padding-left: 22px; background: #fff; border-radius: 16px 16px 0 0; }
.active .title { margin-left: 18px; width: 276px; }
.active::before { content: ""; position: absolute; bottom: 0; left: -16px; right: -16px; height: 16px; background: radial-gradient(circle at 0 0, transparent 15.500px, #fff 16px) left / 16px 16px no-repeat, radial-gradient(circle at 100% 0, transparent 15.500px, #fff 16px) right / 16px 16px no-repeat; }
.plus { width: 24px; height: 24px; margin: 22px 0 0 32px; }
.chev { width: 20px; height: 12px; margin: 29px 0 0 134px; }

.toolbar { flex: none; display: flex; align-items: center; height: 72px; padding-left: 30px; }
.nav { width: 28px; height: 28px; }
.n2 { margin-left: 36px; }
.n3 { margin-left: 36px; margin-right: 30px; }
.omnibox { display: flex; align-items: center; width: 2580px; height: 56px; border-radius: 28px; background: #ddd; font-size: 28px; padding-left: 28px; }
.lock { width: 16px; height: 22px; }
.url { margin-left: 24px; flex: 1; color: #5c5e61; white-space: nowrap; }
.url b { font-weight: 400; color: #202124; letter-spacing: -.11px; }
.share { width: 24px; height: 28px; margin-right: 38px; }
.star { width: 28px; height: 28px; margin-right: 22px; }
.tool { width: 28px; height: 28px; margin-left: 30px; }
.t2 { width: 32px; margin-left: 34px; }
.t3 { margin-left: 34px; }
.me { width: 44px; height: 44px; margin-left: 28px; border-radius: 50%; background: #806055; color: #fff; font-size: 22px; display: flex; align-items: center; justify-content: center; }
.update { display: flex; align-items: center; width: 176px; height: 56px; margin-left: 14px; padding-left: 25px; border: 2px solid #18703a; border-radius: 28px; background: #e8f3ec; color: #136c31; font-size: 26px; font-weight: 500; letter-spacing: -.34px; }
.update svg { width: 8px; height: 26px; margin-left: 28px; fill: #136c31; }

.bookmarks { flex: none; display: grid; grid-template-columns: 128px 287px 64px 298px 300px 64px 298px 64px 304px 296px 63px 309px 195px 508px auto; align-items: center; height: 68px; margin-top: -2px; padding: 0 0 7px 28px; border-bottom: 2px solid #c8cac9; font-size: 24px; letter-spacing: -.16px; white-space: nowrap; }
.bookmarks span { display: flex; align-items: center; gap: 17px; }
.bookmarks svg { width: 32px; height: 32px; }
.fpt { font: italic 700 11px Inter, sans-serif; fill: #fff; }
.more { font-weight: 500; }

/* admin page */
.page { flex: none; height: 1828px; overflow: hidden; position: relative; background: #f2f3f9; color: #001737; font-family: "Open Sans", "Noto Sans", sans-serif; }
.topbar { display: flex; align-items: center; height: 148px; padding: 0 59px 0 58px; background: #007e3f; }
.logo { width: 252px; height: 80px; border: 2px solid #fff; }
.logo svg { width: 248px; height: 76px; }
.lg1 { font: italic 300 18px "Open Sans", sans-serif; fill: #f3ea2f; }
.lg2 { font: italic 800 18px Inter, sans-serif; fill: #f3ea2f; }
.lg3 { font: italic 600 8px Inter, sans-serif; fill: #f3ea2f; }
.burger { display: flex; flex-direction: column; gap: 5px; width: 31px; margin: 2px 124px 0 101px; }
.burger i { height: 7px; border-radius: 4px; background: #fff; }
.avatar { width: 80px; height: 80px; margin-right: 8px; }
.hello, .user { font-size: 32px; margin-top: -7px; width: 101px; color: #06203a; }
.user { flex: 1; }
.btn { position: relative; display: flex; align-items: center; justify-content: center; height: 80px; border: 2px solid #dfe0f3; border-radius: 8px; box-shadow: 0 10px 24px rgba(222, 222, 245, .85); background: #007e3f; color: #00233a; }
.today { width: 322px; font-size: 28px; justify-content: flex-start; padding-left: 27px; }
.today svg { width: 30px; height: 28px; margin: 4px 0 0 22px; }
.sq { width: 79px; margin-left: 54px; }
.sq + .sq { margin-left: 55px; }
.sq svg { width: 34px; height: 34px; margin-top: 8px; color: #001737; }
.sq i { position: absolute; left: 39px; top: 20px; width: 14px; height: 14px; border-radius: 50%; background: #dc2d3c; }

.body { display: flex; }
.sidebar { width: 472px; height: 1700px; margin: 40px 59px 0 16px; padding: 32px 40px 0 62px; background: #fff; border: 2px solid #dddef2; border-radius: 10px; box-shadow: 0 0 20px rgba(200, 200, 255, .35); display: grid; grid-template-rows: 100px 98px 125px 100px 124px 99px 97px; align-content: start; font-family: Inter, sans-serif; font-feature-settings: "cv11"; font-size: 28px; }
.sidebar a { display: flex; align-items: center; min-width: 0; padding-left: 19px; overflow: hidden; white-space: nowrap; }
.sidebar svg { width: 38px; height: 36px; }
.sidebar span { margin-left: 24px; letter-spacing: -.1px; }
.sidebar .tight span { margin-left: 2px; }
.sidebar .caps { font-size: 27px; letter-spacing: -.7px; }
.sidebar .mid { letter-spacing: -.45px; }
.sidebar .loose { letter-spacing: -.22px; }
.sidebar .wide span { font-size: 29px; letter-spacing: .7px; }
.sidebar em { width: 80px; height: 46px; margin-left: auto; margin-right: 28px; border-radius: 8px; background: #dc2d3c; color: #fff; font-size: 26px; display: flex; align-items: center; justify-content: center; }
.sidebar .add { width: 22px; height: 22px; margin-left: auto; margin-right: 28px; }
.sidebar .on { background: #f5f6fd; color: #14243a; }

main { width: 2654px; }
.notice { display: flex; align-items: center; justify-content: flex-end; height: 114px; padding-top: 14px; margin-right: -6px; color: #f00; font: 700 38px "Courier Prime", Courier, "Liberation Mono", monospace; white-space: nowrap; }
.card { width: 2654px; height: 1600px; padding: 35px 35px 0 36px; background: #fff; border: 2px solid #dddef2; border-radius: 8px; box-shadow: 0 0 20px rgba(200, 200, 255, .35); }
h2 { margin: 0 0 37px -2px; font-size: 36px; line-height: 60px; font-weight: 400; }
.search { display: flex; height: 92px; margin-left: -1px; }
.field { flex: 1; border: 2px solid #f0f0f2; border-right: 0; border-radius: 4px 0 0 4px; }
.search button { width: 131px; border: 0; border-radius: 0 6px 6px 0; background: #7a45b9; color: #fff; font: 28px "Open Sans", sans-serif; box-shadow: 0 4px 8px rgba(122, 69, 185, .4); }
table { width: 2536px; margin: 28px 0 0 21px; border-collapse: collapse; table-layout: fixed; }
.c1 { width: 117px; } .c2 { width: 280px; } .c3 { width: 802px; } .c4 { width: 534px; } .c5 { width: 534px; } .c6 { width: 267px; }
th, td { border: 2px solid #f0f0f2; padding: 0 0 0 29.500px; text-align: left; vertical-align: middle; font-weight: 400; }
th { height: 114px; font-size: 32px; }
td { height: 166px; font-size: 28px; }
td:last-child { padding: 0; }
.badge { display: inline-flex; align-items: center; height: 46px; padding: 0 14.500px; border-radius: 8px; font: 24px "Liberation Sans", Arial, sans-serif; color: #fff; vertical-align: middle; }
.blue { background: #3279cb; } .red { background: #da2e3c; } .purple { background: #7a45b9; }
.black { background: #000; } .orange { background: #f18f17; color: #1d222b; } .green { background: #1fbb0b; }
.acts { display: flex; justify-content: center; gap: 40px; }
.acts i { width: 84px; height: 84px; border-radius: 50%; display: flex; align-items: center; justify-content: center; }
.eye { background: #3279cb; box-shadow: 0 4px 8px rgba(50, 121, 203, .3); }
.eye svg { width: 28px; height: 20px; margin-top: 3px; }
.edit { background: #f18f17; box-shadow: 0 4px 8px rgba(241, 143, 23, .3); }
.edit svg { width: 26px; height: 26px; }
.fab { position: absolute; left: 3110px; top: 1658px; width: 90px; height: 90px; border-radius: 50%; background: #007e3f; color: #fff; display: flex; align-items: center; justify-content: center; }
.fab svg { width: 29px; height: 29px; margin-right: 3px; }

/* dock */
.dock { position: absolute; left: 3262px; top: 162px; width: 88px; height: 1826px; padding-top: 4px; border: 2px solid #444345; border-radius: 26px; background: linear-gradient(#131312, #232122 10%); box-shadow: 0 0 70px rgba(0, 0, 0, .3); }
.app { position: relative; height: 70px; padding-left: 12px; display: flex; align-items: center; }
.app svg { width: 54px; height: 54px; }
.app .w58 { width: 58px; margin-left: -1px; }
.app .w62 { width: 62px; height: 62px; margin-left: -4px; }
.app .w64 { width: 64px; height: 64px; margin-left: -5px; }
.app .w66 { width: 66px; height: 66px; margin-left: -6px; }
.app .h62 { height: 62px; margin-top: -8px; }
.app .h60 { height: 60px; }
.run::after { content: ""; position: absolute; right: 4px; top: 32px; width: 8px; height: 8px; border-radius: 50%; background: #98979a; }
.app b { position: absolute; left: 50px; top: 0; width: 24px; height: 24px; border-radius: 50%; background: #f4352c; color: #fff; font-size: 14px; font-weight: 400; line-height: 24px; text-align: center; }
.dock hr { height: 2px; margin: 15px 10px; border: 0; background: #5b5a5c; }
.dock .h2 { margin: 14px 10px; }
.feb { font: 700 10px Inter, sans-serif; fill: #fff; text-anchor: middle; }
.d19 { font: 300 27px Inter, sans-serif; fill: #222; text-anchor: middle; }
.wd { font: 700 14px Inter, sans-serif; fill: #fff; text-anchor: middle; }
.zl { font: 700 16px Inter, sans-serif; fill: #0a5cf5; text-anchor: middle; }
```
